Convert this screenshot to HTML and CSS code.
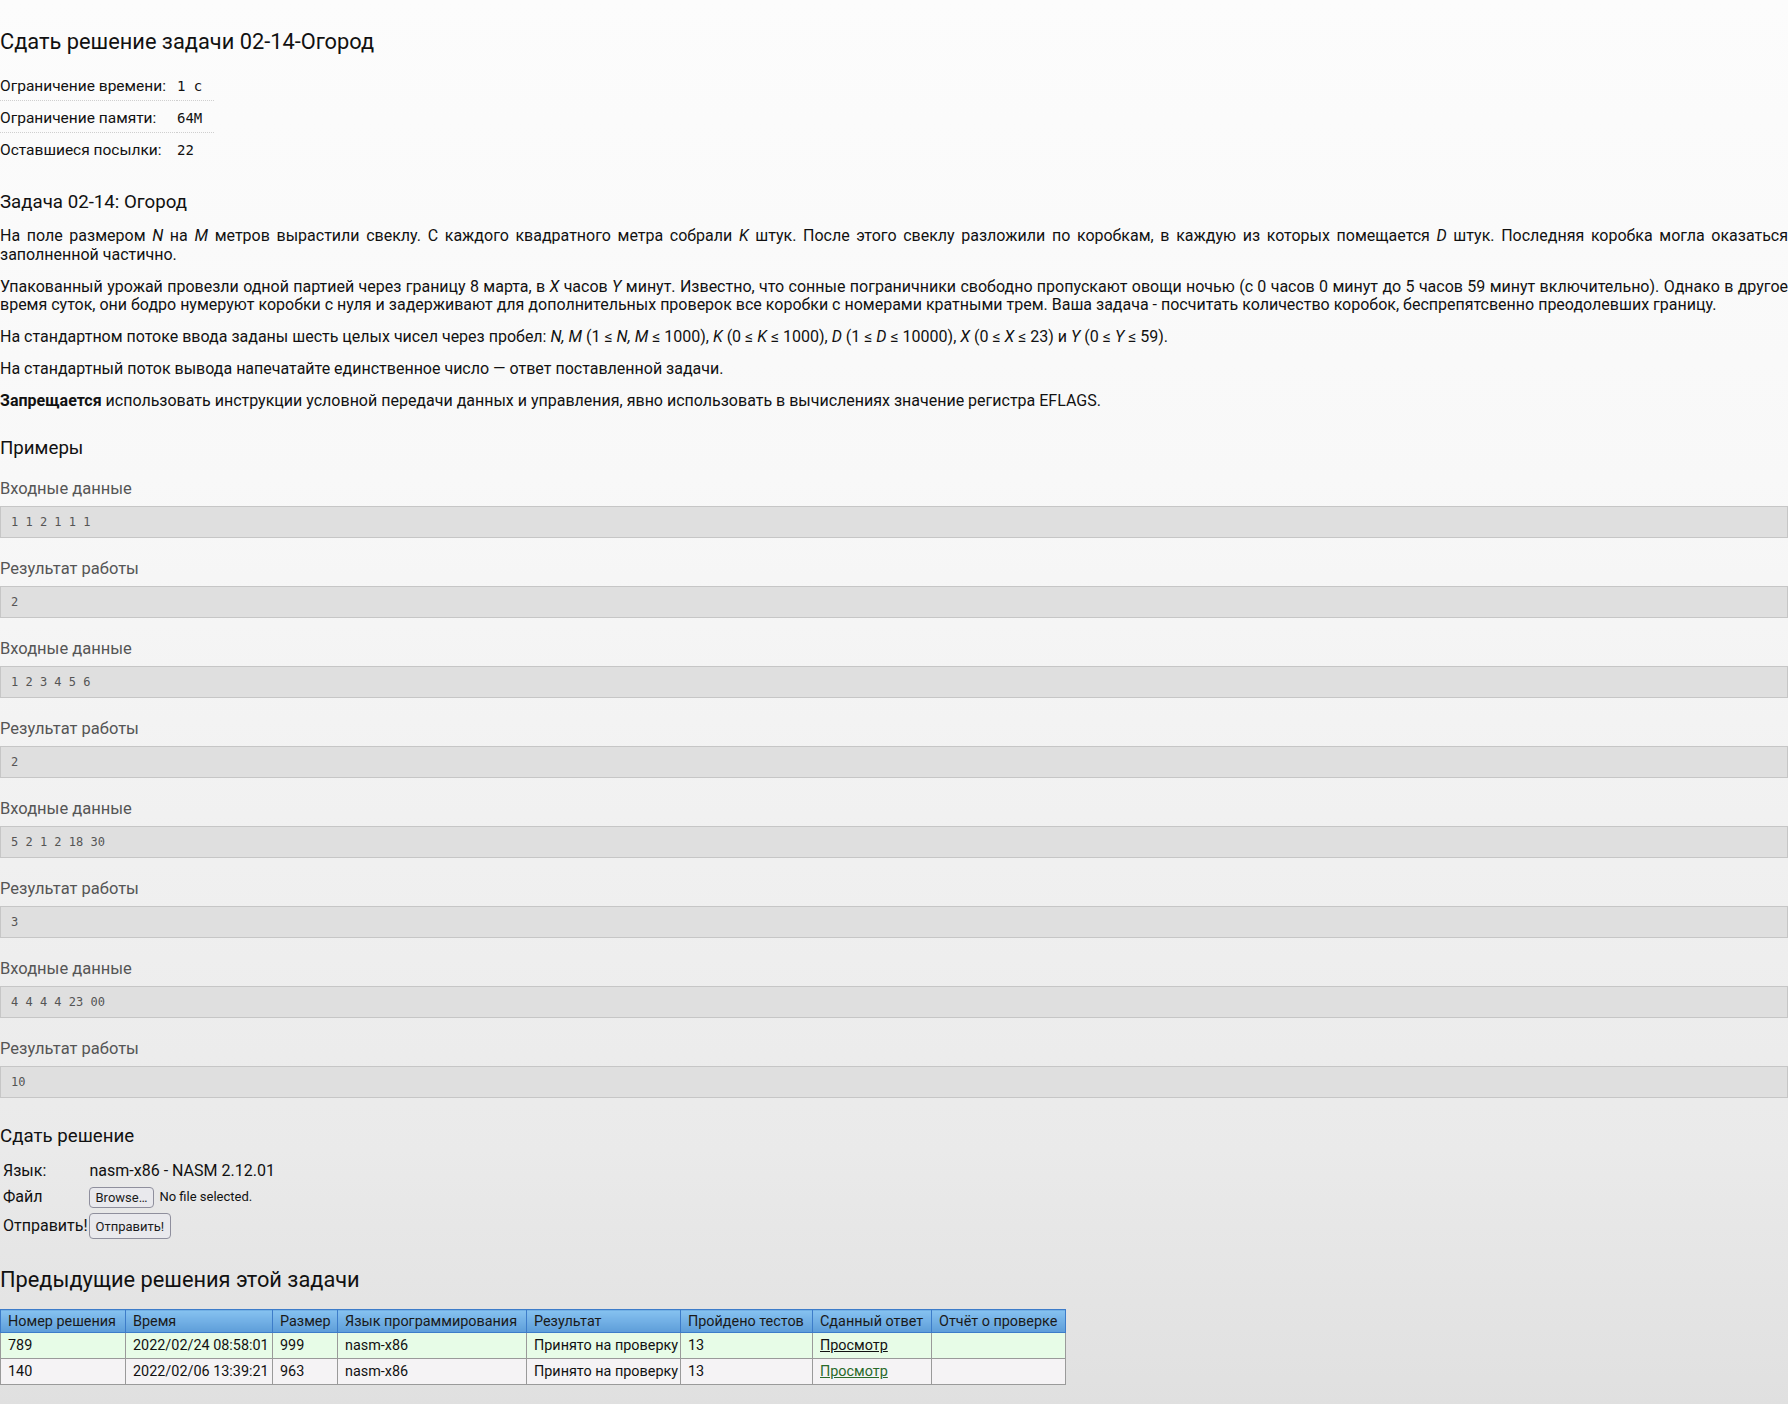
FILE: index.html
```html
<!DOCTYPE html>
<html lang="ru">
<head>
<meta charset="utf-8">
<title>Сдать решение задачи 02-14-Огород</title>
<link rel="stylesheet" href="styles.css">
</head>
<body>
<h2 class="title">Сдать решение задачи 02-14-Огород</h2>
<table class="limits">
  <colgroup><col class="lim-c1"><col class="lim-c2"></colgroup>
  <tr><td class="lim-label">Ограничение времени:</td><td class="lim-value">1 с</td></tr>
  <tr><td class="lim-label">Ограничение памяти:</td><td class="lim-value">64M</td></tr>
  <tr><td class="lim-label">Оставшиеся посылки:</td><td class="lim-value">22</td></tr>
</table>

<h3 class="subtitle task-title">Задача 02-14: Огород</h3>
<div class="statement">
  <p>На поле размером <i>N</i> на <i>M</i> метров вырастили свеклу. С каждого квадратного метра собрали <i>K</i> штук. После этого свеклу разложили по коробкам, в каждую из которых помещается <i>D</i> штук. Последняя коробка могла оказаться заполненной частично.</p>
  <p>Упакованный урожай провезли одной партией через границу 8 марта, в <i>X</i> часов <i>Y</i> минут. Известно, что сонные пограничники свободно пропускают овощи ночью (с 0 часов 0 минут до 5 часов 59 минут включительно). Однако в другое время суток, они бодро нумеруют коробки с нуля и задерживают для дополнительных проверок все коробки с номерами кратными трем. Ваша задача - посчитать количество коробок, беспрепятсвенно преодолевших границу.</p>
  <p>На стандартном потоке ввода заданы шесть целых чисел через пробел: <i>N, M</i> (1 ≤ <i>N, M</i> ≤ 1000), <i>K</i> (0 ≤ <i>K</i> ≤ 1000), <i>D</i> (1 ≤ <i>D</i> ≤ 10000), <i>X</i> (0 ≤ <i>X</i> ≤ 23) и <i>Y</i> (0 ≤ <i>Y</i> ≤ 59).</p>
  <p>На стандартный поток вывода напечатайте единственное число — ответ поставленной задачи.</p>
  <p><b>Запрещается</b> использовать инструкции условной передачи данных и управления, явно использовать в вычислениях значение регистра EFLAGS.</p>
</div>

<h3 class="subtitle examples-title">Примеры</h3>
<div class="examples">
  <div class="ex-label">Входные данные</div>
  <pre class="ex-box">1 1 2 1 1 1</pre>
  <div class="ex-label">Результат работы</div>
  <pre class="ex-box">2</pre>
  <div class="ex-label">Входные данные</div>
  <pre class="ex-box">1 2 3 4 5 6</pre>
  <div class="ex-label">Результат работы</div>
  <pre class="ex-box">2</pre>
  <div class="ex-label">Входные данные</div>
  <pre class="ex-box">5 2 1 2 18 30</pre>
  <div class="ex-label">Результат работы</div>
  <pre class="ex-box">3</pre>
  <div class="ex-label">Входные данные</div>
  <pre class="ex-box">4 4 4 4 23 00</pre>
  <div class="ex-label">Результат работы</div>
  <pre class="ex-box">10</pre>
</div>

<h3 class="subtitle submit-title">Сдать решение</h3>
<table class="submit-form">
  <tr><td class="sf-label">Язык:</td><td class="sf-field">nasm-x86 - NASM 2.12.01</td></tr>
  <tr><td class="sf-label">Файл</td><td class="sf-field"><span class="file-input"><button class="btn file-btn" type="button">Browse…</button><span class="file-name">No file selected.</span></span></td></tr>
  <tr><td class="sf-label">Отправить!</td><td class="sf-field"><button class="btn send-btn" type="button">Отправить!</button></td></tr>
</table>

<h2 class="title prev-title">Предыдущие решения этой задачи</h2>
<table class="runs">
  <colgroup>
    <col class="c1"><col class="c2"><col class="c3"><col class="c4"><col class="c5"><col class="c6"><col class="c7"><col class="c8">
  </colgroup>
  <thead>
    <tr><th>Номер решения</th><th>Время</th><th>Размер</th><th>Язык программирования</th><th>Результат</th><th>Пройдено тестов</th><th>Сданный ответ</th><th>Отчёт о проверке</th></tr>
  </thead>
  <tbody>
    <tr class="row-ok"><td>789</td><td>2022/02/24 08:58:01</td><td>999</td><td>nasm-x86</td><td>Принято на проверку</td><td>13</td><td><a class="link link-dark" href="#">Просмотр</a></td><td></td></tr>
    <tr class="row-plain"><td>140</td><td>2022/02/06 13:39:21</td><td>963</td><td>nasm-x86</td><td>Принято на проверку</td><td>13</td><td><a class="link link-green" href="#">Просмотр</a></td><td></td></tr>
  </tbody>
</table>
</body>
</html>
```

FILE: styles.css
```css
html {
  min-height: 100%;
  background: linear-gradient(to bottom, #fcfcfc 0px, #f8f8f8 480px, #eaeaea 1150px, #e0e0e0 1404px);
}

body {
  margin: 0;
  font-family: Roboto, "Liberation Sans", sans-serif;
  font-size: 16px;
  color: #111;
  padding-bottom: 20px;
}

.title {
  font-size: 21.8px;
  font-weight: 400;
  line-height: 26px;
  margin: 28.5px 0 14.5px;
}

/* limits */
.limits {
  border-collapse: collapse;
  table-layout: fixed;
  width: 214px;
  font-size: 15.5px;
}

.lim-c1 { width: 177px; }
.lim-c2 { width: 37px; }

.limits td {
  padding: 8px 0 5px;
  line-height: 18px;
  border-bottom: 1px dotted #cfcfcf;
  vertical-align: baseline;
  white-space: nowrap;
}

.limits tr:last-child td {
  border-bottom: none;
}

.lim-value {
  font-family: "DejaVu Sans Mono", monospace;
  font-size: 14px;
}

/* headings */
.subtitle {
  font-size: 18.7px;
  font-weight: 400;
  line-height: 22px;
  margin: 26.6px 0 0;
}

/* statement */
.statement {
  margin-top: 14.3px;
}

.statement p {
  font-size: 16px;
  line-height: 18.75px;
  margin: 0 0 13.2px;
  text-align: justify;
}

.statement p:last-child {
  margin-bottom: 0;
}

/* examples */
.ex-label {
  color: #555;
  font-size: 16.5px;
  line-height: 20px;
  margin: 20.4px 0 7.6px;
}

.examples .ex-label:first-child {
  margin-top: 19.2px;
}

.ex-box {
  margin: 0;
  height: 30px;
  line-height: 30px;
  padding: 0 10px;
  background: #dfdfdf;
  border: 1px solid #c6c6c6;
  color: #555;
  font-family: "DejaVu Sans Mono", monospace;
  font-size: 12px;
}

/* submit form */
.submit-form {
  margin-top: 12.5px;
  border-spacing: 2px;
  font-size: 16px;
  line-height: 18.75px;
}

.submit-form td {
  vertical-align: middle;
  white-space: nowrap;
}

.sf-label {
  padding: 1px 0 1px 1px;
}

.sf-field {
  padding: 1px 1px 1px 0;
}

.file-input {
  display: inline-flex;
  align-items: center;
  margin-left: -1px;
}

.btn {
  font-family: Roboto, "Liberation Sans", sans-serif;
  font-size: 13px;
  color: #1b1b1b;
  background: #e9e9ed;
  border: 1px solid #8f8f9d;
  border-radius: 4px;
  padding: 0 6px;
  box-sizing: border-box;
}

.file-btn {
  height: 21px;
  margin: 2px 0 1px;
}

.file-name {
  font-size: 13px;
  margin-left: 5px;
}

.send-btn {
  display: block;
  height: 26px;
  margin-left: -1px;
}

.prev-title {
  margin: 24.5px 0 16.5px;
}

/* runs table */
.runs {
  border-collapse: collapse;
  table-layout: fixed;
  width: 1065px;
  font-size: 14.4px;
}

.c1 { width: 125px; }
.c2 { width: 147px; }
.c3 { width: 65px; }
.c4 { width: 189px; }
.c5 { width: 154px; }
.c6 { width: 132px; }
.c7 { width: 119px; }
.c8 { width: 134px; }

.runs th {
  height: 22px;
  padding: 0 7px;
  font-weight: 400;
  text-align: left;
  white-space: nowrap;
  color: #1a1a1a;
  background: linear-gradient(to bottom, #86c2f0, #5d9dd9);
  border: 1px solid #3d7cc9;
}

.runs td {
  height: 25px;
  padding: 0 7px;
  white-space: nowrap;
  border: 1px solid #9a9a9a;
}

.row-ok td {
  background: #e7fce7;
}

.row-plain td {
  background: #f5f3f5;
}

.link {
  text-decoration: underline;
}

.link-dark {
  color: #111;
}

.link-green {
  color: #2a6a2a;
}
```
